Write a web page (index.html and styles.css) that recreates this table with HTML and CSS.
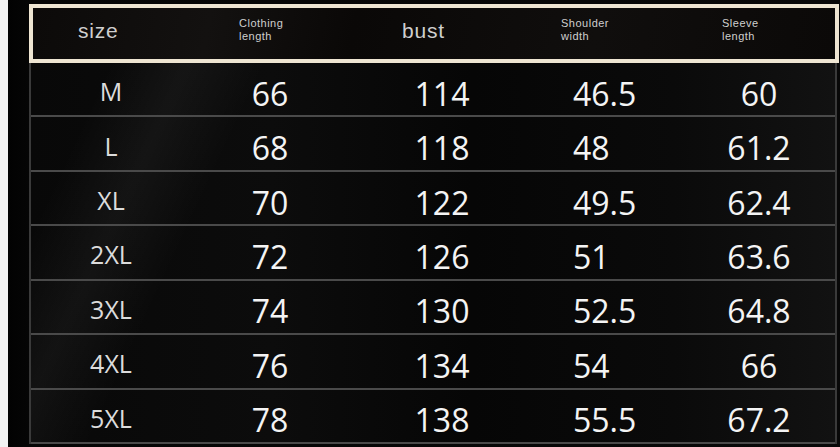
FILE: index.html
```html
<!DOCTYPE html>
<html lang="en">
<head>
<meta charset="utf-8">
<title>Size chart</title>
<link rel="stylesheet" href="styles.css">
</head>
<body>
<div class="page">
  <div class="edge"></div>
  <div class="sheet">
    <div class="head">
      <div class="h h-big h-c1">size</div>
      <div class="h h-small h-c2">Clothing<br>length</div>
      <div class="h h-big h-c3">bust</div>
      <div class="h h-small h-c4">Shoulder<br>width</div>
      <div class="h h-small h-c5">Sleeve<br>length</div>
    </div>
    <div class="body">
      <div class="row"><div class="c size">M</div><div class="c">66</div><div class="c">114</div><div class="c left">46.5</div><div class="c last">60</div></div>
      <div class="row"><div class="c size">L</div><div class="c">68</div><div class="c">118</div><div class="c left">48</div><div class="c last">61.2</div></div>
      <div class="row"><div class="c size">XL</div><div class="c">70</div><div class="c">122</div><div class="c left">49.5</div><div class="c last">62.4</div></div>
      <div class="row"><div class="c size">2XL</div><div class="c">72</div><div class="c">126</div><div class="c left">51</div><div class="c last">63.6</div></div>
      <div class="row"><div class="c size">3XL</div><div class="c">74</div><div class="c">130</div><div class="c left">52.5</div><div class="c last">64.8</div></div>
      <div class="row"><div class="c size">4XL</div><div class="c">76</div><div class="c">134</div><div class="c left">54</div><div class="c last">66</div></div>
      <div class="row"><div class="c size">5XL</div><div class="c">78</div><div class="c">138</div><div class="c left">55.5</div><div class="c last">67.2</div></div>
    </div>
  </div>
</div>
</body>
</html>
```
FILE: styles.css
```css
* { box-sizing: border-box; }
html, body {
  margin: 0;
  padding: 0;
  width: 840px;
  height: 447px;
  overflow: hidden;
  background: #040404;
}
.page {
  display: flex;
  height: 447px;
}
.edge {
  width: 8px;
  flex: none;
  background: #f2f2f2;
}
.sheet {
  flex: 1;
  padding: 4px 0 0 21px;
  background: linear-gradient(90deg, #020202 0, #050505 21px, #080808 100%);
}
.head {
  width: 810px;
  height: 59px;
  border: 4px solid #eee5d2;
  background: linear-gradient(100deg, #0c0a09 0%, #131110 22%, #0a0807 40%, #100e0d 70%, #0b0908 100%);
  display: grid;
  grid-template-columns: 157px 160px 185px 138px 1fr;
  align-items: start;
}
.h {
  color: #cfcfcf;
  font-family: "Liberation Sans", Arial, sans-serif;
}
.h-big {
  font-size: 21px;
  line-height: 21px;
  letter-spacing: 0.8px;
  padding-top: 12px;
}
.h-small {
  font-size: 11px;
  line-height: 13px;
  letter-spacing: 0.5px;
  padding-top: 9px;
}
.h-c1 { padding-left: 45px; }
.h-c2 { padding-left: 49px; }
.h-c3 { padding-left: 52px; }
.h-c4 { padding-left: 26px; }
.h-c5 { padding-left: 49px; }
.body {
  width: 808px;
  height: 381px;
  border-left: 2px solid #3a3a3a;
  border-right: 2px solid #3a3a3a;
  display: grid;
  grid-template-rows: repeat(7, 1fr);
  background:
    linear-gradient(115deg, rgba(255,255,255,0) 8%, rgba(255,255,255,0.045) 16%, rgba(255,255,255,0) 24%),
    linear-gradient(90deg, #080808 0%, #0c0c0c 30%, #060606 55%, #0a0a0a 80%, #121212 100%);
}
.row {
  display: grid;
  grid-template-columns: 160px 158px 186px 138px 1fr;
  align-items: center;
  border-bottom: 2px solid #4a4a4a;
}
.c {
  text-align: center;
  font-family: "Open Sans", "Noto Sans", sans-serif;
  font-size: 32px;
  line-height: 32px;
  color: #f4f4f4;
  padding-top: 9px;
}
.c.size {
  font-size: 25px;
  line-height: 25px;
  color: #dcdcdc;
  padding-top: 5px;
}
.c.left {
  text-align: left;
  padding-left: 38px;
}
.c.last {
  padding-left: 10px;
}
```
